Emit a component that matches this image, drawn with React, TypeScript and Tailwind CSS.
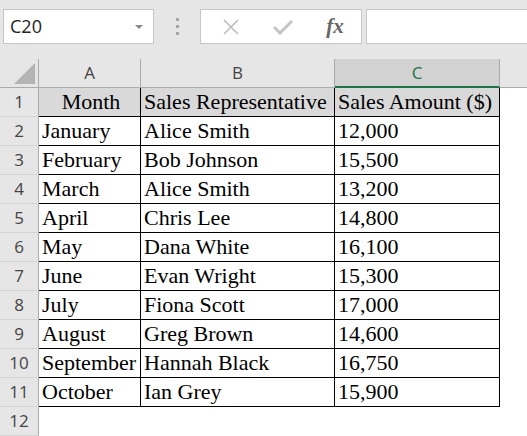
import React from 'react';

const rows = [
  ['Month', 'Sales Representative', 'Sales Amount ($)'],
  ['January', 'Alice Smith', '12,000'],
  ['February', 'Bob Johnson', '15,500'],
  ['March', 'Alice Smith', '13,200'],
  ['April', 'Chris Lee', '14,800'],
  ['May', 'Dana White', '16,100'],
  ['June', 'Evan Wright', '15,300'],
  ['July', 'Fiona Scott', '17,000'],
  ['August', 'Greg Brown', '14,600'],
  ['September', 'Hannah Black', '16,750'],
  ['October', 'Ian Grey', '15,900'],
];

const uiFont = { fontFamily: '"Open Sans", "Noto Sans", sans-serif' };
const cellFont = { fontFamily: '"Liberation Serif", serif' };

const FormulaBar: React.FC = () => (
  <div className="flex h-[59px] items-start bg-[#e6e6e6] pl-[3px] pt-[9px]" style={uiFont}>
    <div className="flex h-[35px] w-[151px] items-center justify-between border border-[#c6c6c6] bg-white pl-[6px] pr-[10px]">
      <span className="text-[18px] text-[#222]">C20</span>
      <span className="h-0 w-0 border-x-[4px] border-t-[4px] border-x-transparent border-t-[#888]" />
    </div>
    <div className="flex h-[35px] w-[46px] flex-col items-center justify-center gap-[4px]">
      <span className="h-[3px] w-[3px] bg-[#a6a6a6]" />
      <span className="h-[3px] w-[3px] bg-[#a6a6a6]" />
      <span className="h-[3px] w-[3px] bg-[#a6a6a6]" />
    </div>
    <div className="flex h-[35px] w-[162px] items-center border border-[#c6c6c6] bg-white">
      <div className="flex w-[56px] justify-center pl-[3px]">
        <svg width="16" height="16" viewBox="0 0 16 16">
          <path d="M1 1 L15 15 M15 1 L1 15" stroke="#bdbdbd" strokeWidth="1.6" fill="none" />
        </svg>
      </div>
      <div className="flex w-[52px] justify-center">
        <svg width="20" height="16" viewBox="0 0 20 16">
          <path d="M1 8 L7 14 L19 2" stroke="#c4c4c4" strokeWidth="3" fill="none" />
        </svg>
      </div>
      <div className="flex w-[52px] justify-center">
        <span className="text-[21px] font-semibold italic text-[#666]" style={cellFont}>fx</span>
      </div>
    </div>
    <div className="ml-[4px] h-[35px] flex-1 border border-r-0 border-[#c6c6c6] bg-white" />
  </div>
);

const colHead = (label: string, extra: string) => (
  <div
    className={`flex h-[29px] items-center justify-center border-r border-[#ababab] text-[17px] ${extra}`}
    style={uiFont}
  >
    {label}
  </div>
);

const rowHead = (n: number) => (
  <div
    className="flex h-[29px] items-center justify-center border-b border-r border-b-[#d4d4d4] border-r-[#ababab] bg-[#e6e6e6] text-[17px] text-[#444]"
    style={uiFont}
  >
    {n}
  </div>
);

export default function App() {
  return (
    <div className="h-[436px] w-[527px] overflow-hidden bg-white">
      <FormulaBar />
      <div className="grid grid-cols-[39px_102px_194px_165px_1fr]">
        <div className="relative h-[29px] border-b border-r border-[#ababab] bg-[#e6e6e6]">
          <div className="absolute bottom-[3px] right-[3px] h-0 w-0 border-b-[21px] border-l-[21px] border-b-[#b4b4b4] border-l-transparent" />
        </div>
        {colHead('A', 'border-b border-b-[#ababab] bg-[#e6e6e6] text-[#444]')}
        {colHead('B', 'border-b border-b-[#ababab] bg-[#e6e6e6] text-[#444]')}
        {colHead('C', 'border-b-2 border-b-[#217346] bg-[#d2d2d2] text-[#217346]')}
        <div className="h-[29px] border-b border-[#ababab] bg-[#e6e6e6]" />

        {rows.map((r, i) => (
          <React.Fragment key={i}>
            {rowHead(i + 1)}
            {r.map((c, j) => (
              <div
                key={j}
                className={`flex h-[29px] items-center overflow-hidden whitespace-nowrap border-b border-r border-black pl-[3px] text-[22px] leading-none text-black ${
                  i === 0 ? 'bg-[#d9d9d9]' : 'bg-white'
                } ${i === 0 && j === 0 ? 'justify-center pl-0' : ''}`}
                style={cellFont}
              >
                {c}
              </div>
            ))}
            <div className="h-[29px] bg-white" />
          </React.Fragment>
        ))}

        {rowHead(12)}
        <div className="h-[29px] bg-white" />
        <div className="h-[29px] bg-white" />
        <div className="h-[29px] bg-white" />
        <div className="h-[29px] bg-white" />
      </div>
    </div>
  );
}
